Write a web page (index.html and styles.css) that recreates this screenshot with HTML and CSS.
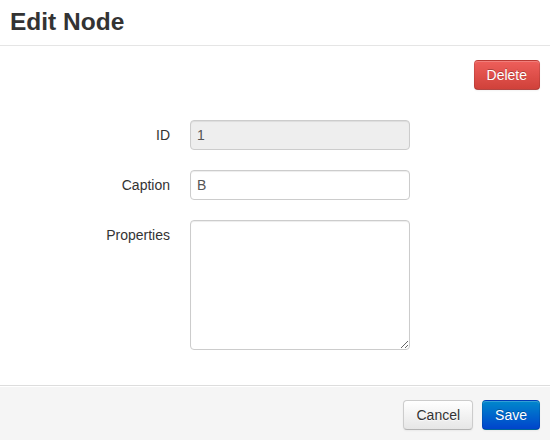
FILE: index.html
```html
<!DOCTYPE html>
<html>
<head>
<meta charset="utf-8">
<link rel="stylesheet" href="styles.css">
</head>
<body>
<div class="modal">
  <div class="modal-header">
    <h3 class="title">Edit Node</h3>
  </div>
  <div class="modal-body">
    <div class="actions">
      <button class="btn btn-danger">Delete</button>
    </div>
    <form class="form-horizontal">
      <div class="control-group">
        <label class="control-label">ID</label>
        <div class="controls"><input class="field" type="text" value="1" disabled></div>
      </div>
      <div class="control-group">
        <label class="control-label">Caption</label>
        <div class="controls"><input class="field" type="text" value="B"></div>
      </div>
      <div class="control-group">
        <label class="control-label">Properties</label>
        <div class="controls"><textarea class="field area"></textarea></div>
      </div>
    </form>
  </div>
  <div class="modal-footer">
    <button class="btn">Cancel</button>
    <button class="btn btn-primary">Save</button>
  </div>
</div>
</body>
</html>
```
FILE: styles.css
```css
html, body {
  margin: 0;
  padding: 0;
  background: #fff;
}
body {
  font-family: "Liberation Sans", Arial, sans-serif;
  font-size: 14px;
  line-height: 20px;
  color: #333;
}
.modal {
  width: 550px;
  height: 440px;
  display: flex;
  flex-direction: column;
}
.modal-header {
  border-bottom: 1px solid #e5e5e5;
  padding: 0 10px;
  box-sizing: border-box;
  height: 46px;
}
.title {
  margin: 0;
  font-size: 24.5px;
  font-weight: bold;
  line-height: 44px;
  color: #333;
}
.modal-body {
  flex: 1;
  padding: 14px 10px 0 30px;
}
.actions {
  display: flex;
  justify-content: flex-end;
}
.form-horizontal {
  margin: 30px 0 0 0;
}
.control-group {
  display: flex;
  margin-bottom: 20px;
}
.control-label {
  width: 140px;
  text-align: right;
  padding-top: 5px;
  margin-right: 20px;
  line-height: 20px;
}
.field {
  box-sizing: border-box;
  width: 220px;
  height: 30px;
  padding: 4px 6px;
  font-family: "Liberation Sans", Arial, sans-serif;
  font-size: 14px;
  line-height: 20px;
  color: #555;
  background: #fff;
  border: 1px solid #ccc;
  border-radius: 4px;
  box-shadow: inset 0 1px 1px rgba(0,0,0,0.075);
  margin: 0;
  display: block;
}
.field:disabled {
  background: #eee;
  color: #555;
}
.area {
  height: 130px;
  resize: both;
}
.modal-footer {
  height: 55px;
  box-sizing: border-box;
  background: #f5f5f5;
  border-top: 1px solid #ddd;
  box-shadow: inset 0 1px 0 #fff;
  display: flex;
  justify-content: flex-end;
  align-items: flex-start;
  padding: 14px 10px 0 0;
  gap: 9px;
}
.btn {
  font-family: "Liberation Sans", Arial, sans-serif;
  font-size: 14px;
  line-height: 20px;
  padding: 4px 12px;
  height: 30px;
  box-sizing: border-box;
  border-radius: 4px;
  color: #333;
  text-shadow: 0 1px 1px rgba(255,255,255,0.75);
  background: linear-gradient(#ffffff, #e6e6e6);
  border: 1px solid #ccc;
  border-bottom-color: #b3b3b3;
  box-shadow: inset 0 1px 0 rgba(255,255,255,0.2), 0 1px 2px rgba(0,0,0,0.05);
  margin: 0;
}
.btn-danger {
  color: #fff;
  text-shadow: 0 -1px 0 rgba(0,0,0,0.25);
  background: linear-gradient(#ee5f5b, #d0413a);
  border-color: rgba(0,0,0,0.1) rgba(0,0,0,0.1) rgba(0,0,0,0.25);
}
.btn-primary {
  color: #fff;
  text-shadow: 0 -1px 0 rgba(0,0,0,0.25);
  background: linear-gradient(#0088cc, #0044cc);
  border-color: rgba(0,0,0,0.1) rgba(0,0,0,0.1) rgba(0,0,0,0.25);
}
```
